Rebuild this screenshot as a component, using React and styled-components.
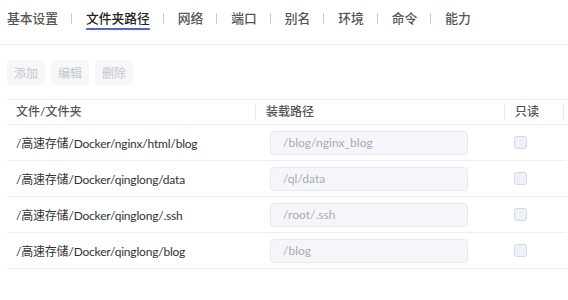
import React from "react"
import styled, { createGlobalStyle } from "styled-components"

const GlobalStyle = createGlobalStyle`
    body {
        margin: 0;
        background: #fff;
        font-family: Lato, "Noto Sans CJK SC", sans-serif;
    }
`

const tabs = ["基本设置", "文件夹路径", "网络", "端口", "别名", "环境", "命令", "能力"]

const rows = [
    { src: "/高速存储/Docker/nginx/html/blog", dst: "/blog/nginx_blog" },
    { src: "/高速存储/Docker/qinglong/data", dst: "/ql/data" },
    { src: "/高速存储/Docker/qinglong/.ssh", dst: "/root/.ssh" },
    { src: "/高速存储/Docker/qinglong/blog", dst: "/blog" },
]

const App = () => {
    return (
        <Page>
            <GlobalStyle />
            <TabBar>
                {tabs.map((t, i) => (
                    <React.Fragment key={t}>
                        {i > 0 && <Sep />}
                        <Tab active={i === 1}>{t}</Tab>
                    </React.Fragment>
                ))}
            </TabBar>
            <Toolbar>
                <Btn>添加</Btn>
                <Btn>编辑</Btn>
                <Btn>删除</Btn>
            </Toolbar>
            <Table>
                <HeadRow>
                    <HeadCell>文件/文件夹</HeadCell>
                    <HeadCell divider>装载路径</HeadCell>
                    <HeadCell divider end>只读</HeadCell>
                </HeadRow>
                {rows.map((r) => (
                    <Row key={r.src}>
                        <Cell>{r.src}</Cell>
                        <Cell>
                            <PathInput>{r.dst}</PathInput>
                        </Cell>
                        <Cell>
                            <Check />
                        </Cell>
                    </Row>
                ))}
            </Table>
        </Page>
    )
}

const Page = styled.div`
    width: 568px;
    height: 300px;
    overflow: hidden;
`

const TabBar = styled.div`
    display: flex;
    align-items: flex-start;
    height: 45px;
    padding: 9px 0 0 7px;
    box-sizing: border-box;
    border-bottom: 1px solid #eceef2;
`

const Tab = styled.div`
    font-size: 12.75px;
    line-height: 18px;
    font-weight: 500;
    color: ${(p) => (p.active ? "#222" : "#555")};
    padding-bottom: 1px;
    border-bottom: 2px solid ${(p) => (p.active ? "#4e66d6" : "transparent")};
    white-space: nowrap;
`

const Sep = styled.span`
    width: 1px;
    height: 11px;
    margin: 4px 14px 0 13px;
    background: #c8cbd2;
`

const Toolbar = styled.div`
    display: flex;
    gap: 6px;
    padding: 15px 0 0 7px;
`

const Btn = styled.div`
    width: 38px;
    height: 25px;
    border-radius: 4px;
    background: #f6f7f9;
    color: #c3c6cc;
    font-size: 12px;
    display: flex;
    align-items: center;
    justify-content: center;
`

const Table = styled.div`
    margin: 14px 2px 0 7px;
    border-top: 1px solid #eceef2;
`

const grid = `
    display: grid;
    grid-template-columns: 248px 249px 1fr;
    align-items: center;
    border-bottom: 1px solid #eceef2;
`

const HeadRow = styled.div`
    ${grid}
    height: 24px;
`

const HeadCell = styled.div`
    font-size: 12px;
    color: #555;
    font-weight: 500;
    padding-left: ${(p) => (p.divider ? "10px" : "9px")};
    border-left: ${(p) => (p.divider ? "1px solid #e3e5ea" : "none")};
    border-right: ${(p) => (p.end ? "1px solid #e3e5ea" : "none")};
    line-height: 14px;
    margin-right: ${(p) => (p.end ? "2px" : "0")};
`

const Row = styled.div`
    ${grid}
    height: 35px;
`

const Cell = styled.div`
    font-size: 12px;
    color: #333;
    letter-spacing: -0.2px;
    padding-left: 9px;
    display: flex;
    align-items: center;
    white-space: nowrap;
    &:nth-child(2) {
        padding-left: 15px;
    }
`

const PathInput = styled.div`
    width: 198px;
    height: 24px;
    box-sizing: border-box;
    border: 1px solid #e6e8ee;
    border-radius: 4px;
    background: #f5f6fa;
    color: #a8abb4;
    font-size: 12px;
    letter-spacing: 0;
    padding-left: 12px;
    display: flex;
    align-items: center;
`

const Check = styled.div`
    width: 13px;
    height: 13px;
    box-sizing: border-box;
    margin-left: 1px;
    border: 1px solid #d5d9e4;
    border-radius: 3px;
    background: #eef1fa;
`

export default App
